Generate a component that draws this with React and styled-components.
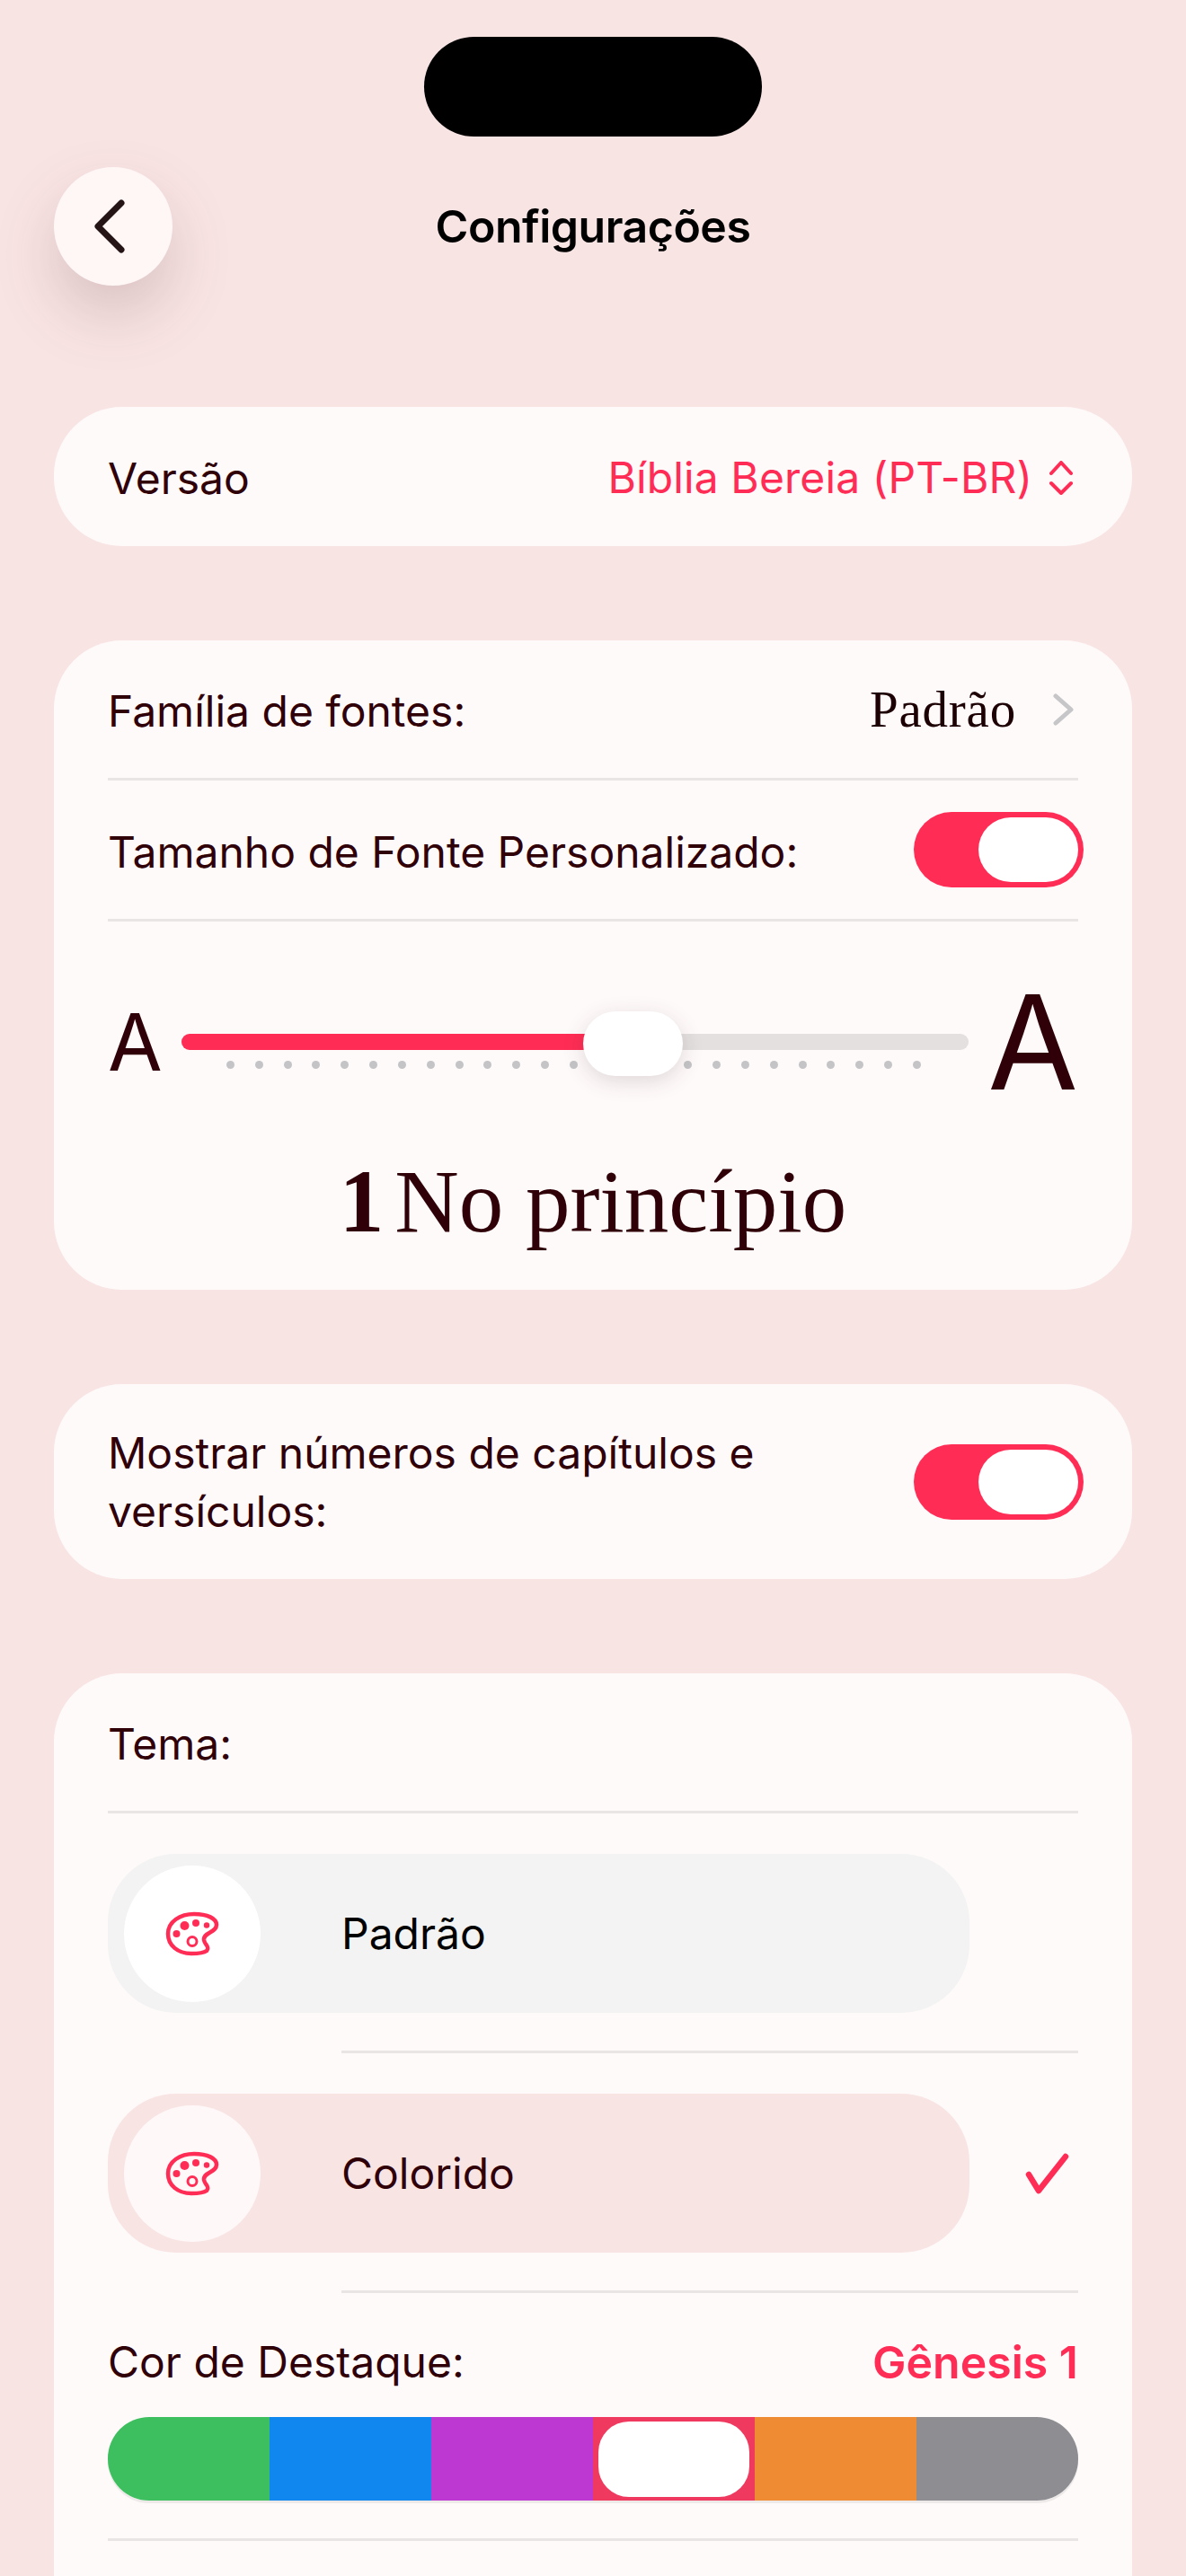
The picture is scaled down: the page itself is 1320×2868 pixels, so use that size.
import React from 'react'
import styled, { createGlobalStyle } from 'styled-components'

const PINK = '#ff2d55'
const INK = '#300008'
const SERIF = '"Liberation Serif", serif'

const GlobalStyle = createGlobalStyle`
  html, body {
    margin: 0;
    padding: 0;
    background: #f9e4e4;
  }
  body {
    font-family: Inter, "Liberation Sans", sans-serif;
    color: ${INK};
  }
`

const Page = styled.div`
  width: 1320px;
  height: 2868px;
  overflow: hidden;
  padding: 41px 60px 0;
  box-sizing: border-box;
  background: #f9e4e4;
`

const Notch = styled.div`
  width: 376px;
  height: 111px;
  margin: 0 auto;
  border-radius: 56px;
  background: #000;
`

const Header = styled.div`
  display: grid;
  grid-template-columns: 132px 1fr 132px;
  align-items: center;
  margin-top: 34px;
`

const BackButton = styled.div`
  width: 132px;
  height: 132px;
  padding-right: 8px;
  box-sizing: border-box;
  border-radius: 50%;
  background: #fff6f6;
  box-shadow: 0 32px 70px rgba(90, 50, 50, 0.2);
  display: flex;
  align-items: center;
  justify-content: center;
`

const Title = styled.div`
  text-align: center;
  font-size: 50px;
  font-weight: 600;
  letter-spacing: -0.5px;
  color: #000;
`

const Cards = styled.div`
  display: flex;
  flex-direction: column;
  gap: 105px;
  margin-top: 135px;
`

const Card = styled.div`
  background: #fffafa;
  border-radius: 76px;
  padding: 0 60px;
  height: ${p => p.$height || 'auto'};
`

const Row = styled.div`
  display: flex;
  align-items: center;
  justify-content: space-between;
  height: ${p => p.$height || '153px'};
`

const Label = styled.div`
  font-size: 48px;
  line-height: 65px;
  padding-top: ${p => p.$nudge || 0}px;
`

const PinkValue = styled.div`
  display: flex;
  align-items: center;
  gap: 18px;
  font-size: 48px;
  letter-spacing: 0.1px;
  color: ${PINK};
  margin-right: 5px;
  padding-top: 2px;
`

const BoldValue = styled.div`
  font-size: 50px;
  font-weight: 600;
  color: ${PINK};
`

const SerifValue = styled.div`
  display: flex;
  align-items: center;
  gap: 41px;
  font-family: ${SERIF};
  font-size: 57px;
  letter-spacing: 0.8px;
  margin-right: 5px;
  color: #1c0004;
`

const Divider = styled.div`
  height: 3px;
  background: #e8e5e4;
  margin-left: ${p => p.$inset || '0'};
`

const ToggleTrack = styled.div`
  width: 189px;
  height: 84px;
  margin-right: -6px;
  flex-shrink: 0;
  border-radius: 42px;
  background: ${PINK};
  display: flex;
  align-items: center;
  justify-content: flex-end;
  padding-right: 6px;
  box-sizing: border-box;
`

const ToggleKnob = styled.div`
  width: 111px;
  height: 72px;
  border-radius: 36px;
  background: #fff;
`

const SliderRow = styled.div`
  display: flex;
  align-items: center;
  justify-content: space-between;
  height: 106px;
  margin-top: 81px;
`

const SizeLetter = styled.div`
  font-size: ${p => p.$size}px;
  line-height: 106px;
  color: ${INK};
`

const SliderBody = styled.div`
  position: relative;
  width: 876px;
  align-self: flex-start;
  margin-top: 44px;
`

const Track = styled.div`
  height: 18px;
  border-radius: 9px;
  background: #e3e0df;
  overflow: hidden;
`

const TrackFill = styled.div`
  height: 100%;
  background: ${PINK};
`

const SliderKnob = styled.div`
  position: absolute;
  left: 447px;
  top: -25px;
  width: 111px;
  height: 72px;
  border-radius: 36px;
  background: #fff;
  box-shadow: 0 6px 24px rgba(60, 40, 40, 0.16);
`

const Ticks = styled.div`
  display: flex;
  justify-content: space-between;
  padding: 0 53px 0 50px;
  margin-top: 12px;
`

const Tick = styled.span`
  width: 9px;
  height: 9px;
  border-radius: 50%;
  background: #c4c4c7;
`

const Verse = styled.div`
  display: flex;
  justify-content: center;
  align-items: baseline;
  gap: 12px;
  margin-top: 70px;
  font-family: ${SERIF};
  font-size: 99px;
  line-height: 110px;
  color: ${INK};
`

const VerseNumber = styled.span`
  font-weight: 700;
`

const ThemeRow = styled.div`
  display: flex;
  align-items: center;
  justify-content: space-between;
  margin: ${p => p.$margin};
`

const ThemePill = styled.div`
  width: 959px;
  height: 177px;
  border-radius: 76px;
  background: ${p => p.$bg};
  display: flex;
  align-items: center;
  gap: 90px;
  padding-left: 18px;
  box-sizing: border-box;
`

const ThemeCircle = styled.div`
  width: 152px;
  height: 152px;
  border-radius: 50%;
  background: ${p => p.$bg};
  display: flex;
  align-items: center;
  justify-content: center;
`

const ThemeName = styled.div`
  font-size: 48px;
  color: ${p => p.$color};
`

const CheckSlot = styled.div`
  margin-right: 10px;
  display: flex;
`

const Swatches = styled.div`
  display: grid;
  grid-template-columns: repeat(6, 1fr);
  height: 93px;
  border-radius: 46px;
  overflow: hidden;
  margin-top: -15px;
  margin-bottom: 42px;
  box-shadow: 0 3px 0 #eeeaea;
`

const Swatch = styled.div`
  background: ${p => p.$color};
  display: flex;
  align-items: center;
  justify-content: center;
`

const SwatchKnob = styled.div`
  width: 168px;
  height: 84px;
  border-radius: 34px;
  background: #fff;
`

const BackIcon = () => (
  <svg width="36" height="62" viewBox="0 0 36 62" fill="none">
    <path d="M31 5 L5 31 L31 57" stroke="#241416" strokeWidth="7" strokeLinecap="round" strokeLinejoin="round" />
  </svg>
)

const UpDownIcon = () => (
  <svg width="28" height="38" viewBox="0 0 28 38" fill="none" stroke={PINK} strokeWidth="4" strokeLinecap="round" strokeLinejoin="round">
    <path d="M3 14 L14 2 L25 14" />
    <path d="M3 25 L14 36 L25 25" />
  </svg>
)

const RightIcon = () => (
  <svg width="23" height="36" viewBox="0 0 23 36" fill="none">
    <path d="M3 3 L20 18 L3 33" stroke="#c6c6c8" strokeWidth="5" strokeLinecap="round" strokeLinejoin="round" />
  </svg>
)

const PaletteIcon = () => (
  <svg width="60" height="50" viewBox="0 0 60 50" fill="none">
    <path
      d="M3 25 C3 11 17 3 32 3 C47 3 57 8 57 15 C57 24 42 23 43 32 C44 38 50 39 46 44 C42 47 35 47 29 47 C14 47 3 38 3 25 Z"
      stroke={PINK}
      strokeWidth="4.5"
    />
    <circle cx="21.5" cy="16" r="5" fill={PINK} />
    <circle cx="34" cy="13" r="4" fill={PINK} />
    <circle cx="46" cy="15.5" r="3.2" fill={PINK} />
    <circle cx="12.5" cy="25" r="4" fill={PINK} />
    <circle cx="30" cy="33.5" r="5" stroke={PINK} strokeWidth="3" />
  </svg>
)

const CheckIcon = () => (
  <svg width="49" height="46" viewBox="0 0 49 46" fill="none">
    <path d="M4 24 L15 42 L45 4" stroke={PINK} strokeWidth="6.5" strokeLinecap="round" strokeLinejoin="round" />
  </svg>
)

const Toggle = () => (
  <ToggleTrack>
    <ToggleKnob />
  </ToggleTrack>
)

const swatchColors = ['#3dbf5f', '#1087ee', '#bd38d2', '#f0395e', '#ee8b33', '#8e8e92']
const tickList = Array.from({ length: 25 }, (_, i) => i)

export default function App() {
  return (
    <Page>
      <GlobalStyle />
      <Notch />
      <Header>
        <BackButton>
          <BackIcon />
        </BackButton>
        <Title>Configurações</Title>
      </Header>

      <Cards>
        <Card $height="155px">
          <Row $height="155px">
            <Label $nudge={3}>Versão</Label>
            <PinkValue>
              Bíblia Bereia (PT-BR)
              <UpDownIcon />
            </PinkValue>
          </Row>
        </Card>

        <Card $height="723px">
          <Row>
            <Label $nudge={3}>Família de fontes:</Label>
            <SerifValue>
              Padrão
              <RightIcon />
            </SerifValue>
          </Row>
          <Divider />
          <Row $height="154px">
            <Label $nudge={4}>Tamanho de Fonte Personalizado:</Label>
            <Toggle />
          </Row>
          <Divider />
          <SliderRow>
            <SizeLetter $size={88}>A</SizeLetter>
            <SliderBody>
              <Track>
                <TrackFill style={{ width: `${(500 / 876) * 100}%` }} />
              </Track>
              <Ticks>
                {tickList.map(i => (
                  <Tick key={i} />
                ))}
              </Ticks>
              <SliderKnob />
            </SliderBody>
            <SizeLetter $size={146}>A</SizeLetter>
          </SliderRow>
          <Verse>
            <VerseNumber>1</VerseNumber>
            No princípio
          </Verse>
        </Card>

        <Card $height="217px">
          <Row $height="217px">
            <Label>
              Mostrar números de capítulos e
              <br />
              versículos:
            </Label>
            <Toggle />
          </Row>
        </Card>

        <Card $height="1100px">
          <Row>
            <Label $nudge={4}>Tema:</Label>
          </Row>
          <Divider />
          <ThemeRow $margin="45px 0 42px">
            <ThemePill $bg="#f3f3f3">
              <ThemeCircle $bg="#ffffff">
                <PaletteIcon />
              </ThemeCircle>
              <ThemeName $color="#000">Padrão</ThemeName>
            </ThemePill>
          </ThemeRow>
          <Divider $inset="260px" />
          <ThemeRow $margin="45px 0 42px">
            <ThemePill $bg="#f9e4e4">
              <ThemeCircle $bg="#fff8f8">
                <PaletteIcon />
              </ThemeCircle>
              <ThemeName $color={INK}>Colorido</ThemeName>
            </ThemePill>
            <CheckSlot>
              <CheckIcon />
            </CheckSlot>
          </ThemeRow>
          <Divider $inset="260px" />
          <Row>
            <Label>Cor de Destaque:</Label>
            <BoldValue>Gênesis 1</BoldValue>
          </Row>
          <Swatches>
            {swatchColors.map((color, i) => (
              <Swatch key={color} $color={color}>
                {i === 3 && <SwatchKnob />}
              </Swatch>
            ))}
          </Swatches>
          <Divider />
        </Card>
      </Cards>
    </Page>
  )
}
